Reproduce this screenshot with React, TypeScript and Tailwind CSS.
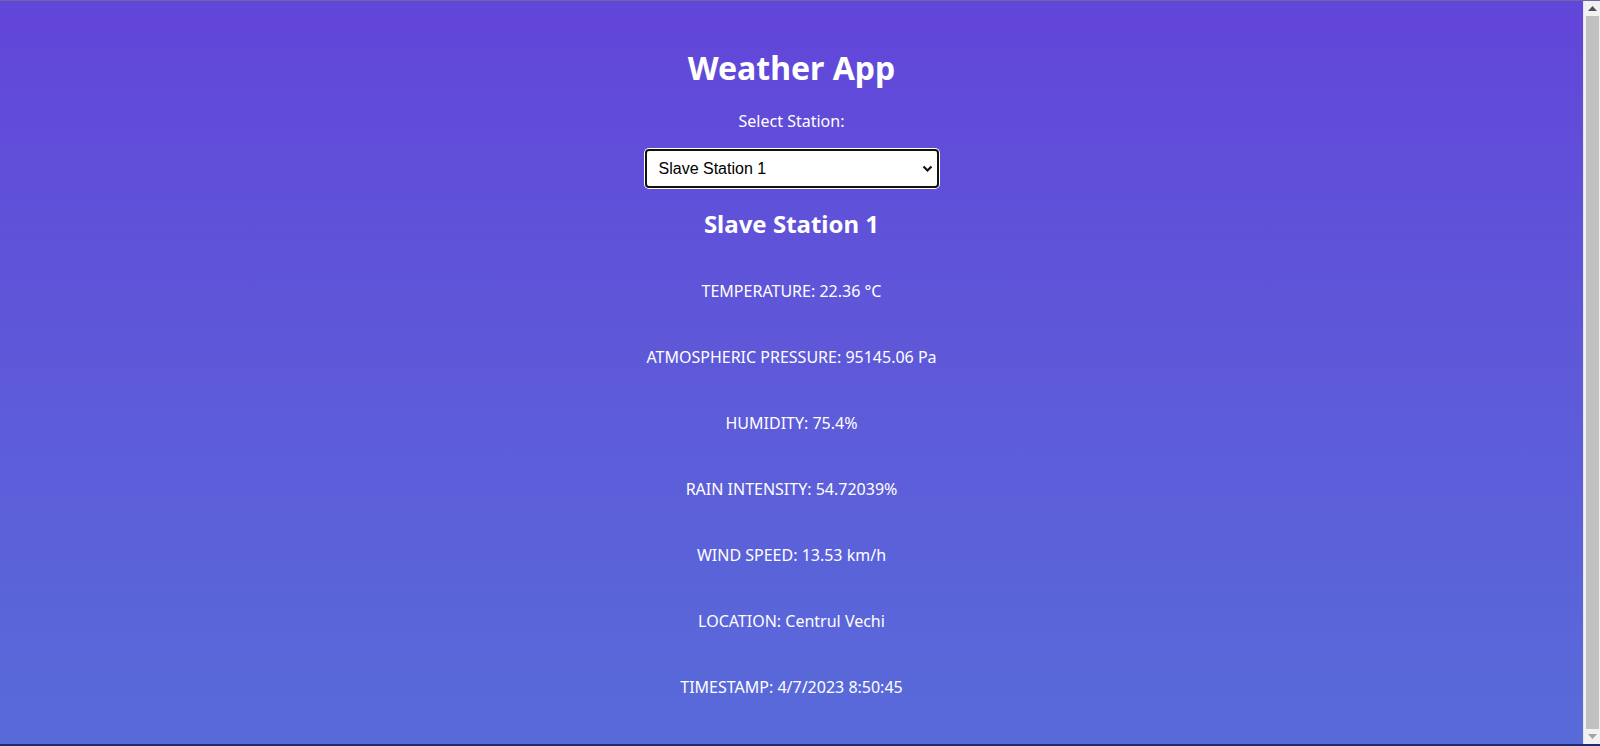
import { useState } from "react";

const stations = ["Slave Station 1", "Slave Station 2", "Slave Station 3"];

const readings = [
  "TEMPERATURE: 22.36 °C",
  "ATMOSPHERIC PRESSURE: 95145.06 Pa",
  "HUMIDITY: 75.4%",
  "RAIN INTENSITY: 54.72039%",
  "WIND SPEED: 13.53 km/h",
  "LOCATION: Centrul Vechi",
  "TIMESTAMP: 4/7/2023 8:50:45",
];

function Scrollbar() {
  return (
    <div className="w-[17px] h-full bg-[#f1f1f1] flex flex-col items-center border-l border-[#e6e6e6]">
      <div className="h-[15px] flex items-center justify-center">
        <svg width="9" height="5" viewBox="0 0 9 5">
          <path d="M0 5 L4.5 0 L9 5 Z" fill="#505050" />
        </svg>
      </div>
      <div className="flex-1 w-[13px] bg-[#c1c1c1]" />
      <div className="h-[15px] flex items-center justify-center">
        <svg width="9" height="5" viewBox="0 0 9 5">
          <path d="M0 0 L9 0 L4.5 5 Z" fill="#a3a3a3" />
        </svg>
      </div>
    </div>
  );
}

export default function App() {
  const [station, setStation] = useState(stations[0]);

  return (
    <div className="h-screen w-full flex overflow-hidden border-t border-[#6f66a8] border-b-2 border-b-[#1f2a6a] bg-gradient-to-b from-[#6245d9] to-[#586bd9]">
      <main className="flex-1 flex flex-col items-center text-white font-['Noto_Sans',sans-serif]">
        <h1 className="mt-[47px] text-[32px] leading-[40px] font-bold">Weather App</h1>
        <label htmlFor="station" className="mt-[21px] text-[16px] leading-[24px]">
          Select Station:
        </label>
        <div className="relative mt-[16px]">
          <select
            id="station"
            value={station}
            onChange={(e) => setStation(e.target.value)}
            className="appearance-none w-[294px] h-[39px] pl-[12px] pr-8 bg-white text-black text-[16px] font-['Liberation_Sans',Arial,sans-serif] border-2 border-[#111] rounded-[4px] ring-1 ring-white outline-none"
          >
            {stations.map((s) => (
              <option key={s}>{s}</option>
            ))}
          </select>
          <svg
            className="absolute right-[6px] top-[16px] pointer-events-none"
            width="11"
            height="8"
            viewBox="0 0 11 8"
          >
            <path d="M1.5 1.5 L5.5 5.5 L9.5 1.5" fill="none" stroke="#111" strokeWidth="2.2" />
          </svg>
        </div>
        <h2 className="mt-[20px] text-[24px] leading-[32px] font-bold">{station}</h2>
        <div className="mt-[18px] flex flex-col items-center">
          {readings.map((r) => (
            <p key={r} className="h-[66px] flex items-center text-[16px]">
              {r}
            </p>
          ))}
        </div>
      </main>
      <Scrollbar />
    </div>
  );
}
